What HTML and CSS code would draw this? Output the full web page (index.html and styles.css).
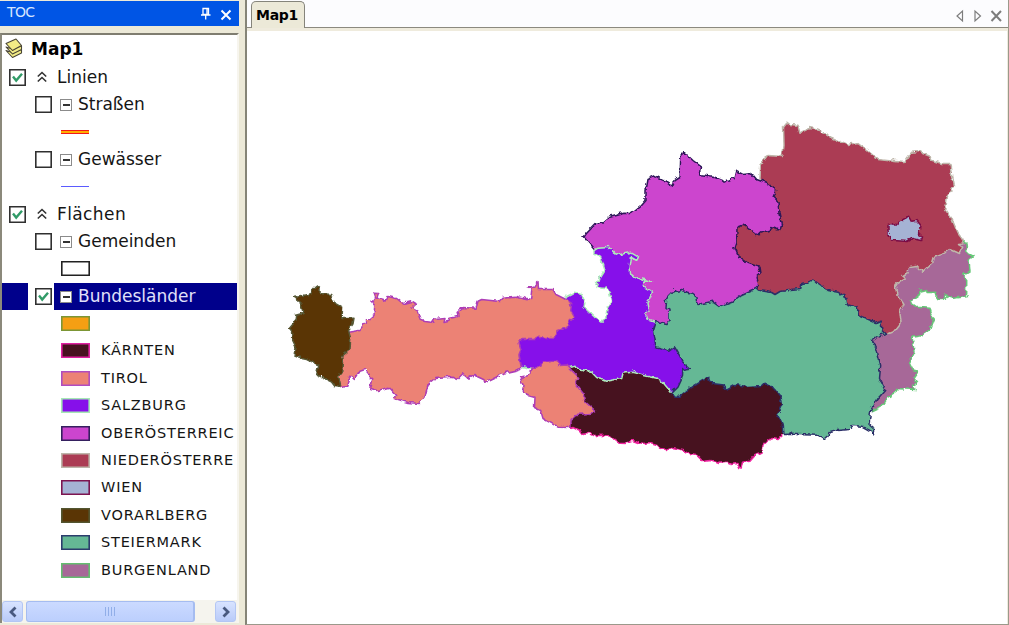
FILE: index.html
```
<!DOCTYPE html>
<html lang="de">
<head>
<meta charset="utf-8">
<title>Map1</title>
<link rel="stylesheet" href="styles.css">
</head>
<body>
<div class="app">
  <aside class="toc">
    <header class="toc-title">
      <span class="toc-name">TOC</span>
      <svg class="pin" width="12" height="14" viewBox="0 0 12 14"><path d="M3 1.500h5.500v6H3zM1 8h9.500M5.700 8v4.500M7 2v5.500" fill="none" stroke="#fff" stroke-width="1.300"/></svg>
      <svg class="close" width="12" height="12" viewBox="0 0 12 12"><path d="M1.500 1.500l9 9M10.500 1.500l-9 9" stroke="#fff" stroke-width="2"/></svg>
    </header>
    <div class="tree">
      <div class="rows">
        <div class="row root">
          <svg class="layers" width="18" height="21" viewBox="0 0 18 21"><g fill="#f3ec86" stroke="#4a4636" stroke-width="1.100" stroke-linejoin="round"><path d="M1 12.500l6.500 7 9-4.500v-3.500l-9 3z"/><path d="M1 9l6.500 7 9-4.500V8l-9 3z"/><path d="M1 5.500L11 1l5.500 6.500-9 5z"/></g></svg>
          <span>Map1</span>
        </div>
        <div class="row group"><span class="check"><svg width="11" height="11" viewBox="0 0 11 11"><path d="M1 4.500l3.200 4L10 1.800" /></svg></span><svg class="chev" width="10" height="12" viewBox="0 0 10 12"><path d="M.8 5.500L5 1.500l4.200 4M.8 10.500L5 6.500l4.200 4"/></svg><span>Linien</span></div>
        <div class="row layer"><span class="check"></span><i class="fold"></i><span>Straßen</span></div>
        <div class="row symbol"><i class="line road"></i></div>
        <div class="row layer"><span class="check"></span><i class="fold"></i><span>Gewässer</span></div>
        <div class="row symbol"><i class="line water"></i></div>
        <div class="row group"><span class="check"><svg width="11" height="11" viewBox="0 0 11 11"><path d="M1 4.500l3.200 4L10 1.800" /></svg></span><svg class="chev" width="10" height="12" viewBox="0 0 10 12"><path d="M.8 5.500L5 1.500l4.200 4M.8 10.500L5 6.500l4.200 4"/></svg><span class="wide">Flächen</span></div>
        <div class="row layer"><span class="check"></span><i class="fold"></i><span>Gemeinden</span></div>
        <div class="row symbol"><i class="swatch plain"></i></div>
        <div class="row layer selected"><span class="check-cell"><span class="check"><svg width="11" height="11" viewBox="0 0 11 11"><path d="M1 4.500l3.200 4L10 1.800" /></svg></span></span><i class="fold"></i><span>Bundesländer</span></div>
        <div class="row symbol"><i class="swatch other"></i></div>
        <div class="row symbol"><i class="swatch kaernten"></i><span>KÄRNTEN</span></div>
        <div class="row symbol"><i class="swatch tirol"></i><span>TIROL</span></div>
        <div class="row symbol"><i class="swatch salzburg"></i><span>SALZBURG</span></div>
        <div class="row symbol"><i class="swatch ooe"></i><span>OBERÖSTERREIC</span></div>
        <div class="row symbol"><i class="swatch noe"></i><span>NIEDERÖSTERRE</span></div>
        <div class="row symbol"><i class="swatch wien"></i><span>WIEN</span></div>
        <div class="row symbol"><i class="swatch vorarlberg"></i><span>VORARLBERG</span></div>
        <div class="row symbol"><i class="swatch steiermark"></i><span>STEIERMARK</span></div>
        <div class="row symbol"><i class="swatch burgenland"></i><span>BURGENLAND</span></div>
      </div>
      <div class="scrollbar">
        <span class="sb-btn"><svg width="10" height="12" viewBox="0 0 10 12"><path d="M7.500 1.500L3 6l4.500 4.500"/></svg></span>
        <span class="thumb"><i></i><i></i><i></i><i></i></span>
        <span class="sb-btn"><svg width="10" height="12" viewBox="0 0 10 12"><path d="M2.500 1.500L7 6l-4.500 4.500"/></svg></span>
      </div>
    </div>
  </aside>
  <main class="view">
    <nav class="tabs">
      <span class="tab">Map1</span>
      <svg class="tab-tools" width="50" height="14" viewBox="0 0 50 14"><g fill="none" stroke="#7d7d7d" stroke-width="1.200"><path d="M7.500 2v10l-5.500-5zM20 2v10l5.500-5z"/><path d="M36.500 2l9.500 10M46 2l-9.500 10" stroke-width="2"/></g></svg>
    </nav>
    <div class="canvas">
      <svg class="map" width="700" height="370" viewBox="280 110 700 370">
        <defs><filter id="coast" filterUnits="userSpaceOnUse" x="280" y="110" width="700" height="370" color-interpolation-filters="sRGB"><feTurbulence type="turbulence" baseFrequency="0.16" numOctaves="1" seed="4" result="n"/><feDisplacementMap in="SourceGraphic" in2="n" scale="4.500" xChannelSelector="R" yChannelSelector="G"/></filter></defs>
        <g class="states" transform="translate(-2 -1.500)" filter="url(#coast)">
          <path class="kaernten" d="M570.700 428L574 427L580 430L583 434L589 433L595 436L607 435.700L614 438L620 442.700L626 443L632 440.700L638 443L645 444L650 443L657 445L661 449L667 450L672 448L683 450L690 454L697 455L703 461L711 460L719 463L727 461.700L732 464L738 463L740.700 470L742.500 461.700L750 460.700L755 455L763 452.700L764 445L767 441.700L772 438L778 439L783.500 434L790 420L785 385L700 375L675 382L660 370L600 365L571 360L560 400L560 420L570.700 423Z"/>
          <path class="burgenland" d="M966.700 242.700L968 253L974 256L969 260L970 271.700L963 275.700L966.700 280L966.700 293L969 296L953 297.700L948 296L945 299L938 299L935.700 291.700L927 292L926.700 290L920 291.700L919 295.700L910 301.700L917 306.700L930 307.700L931.700 315L934.500 319L930.700 329L923 335L913 336.700L915 351.700L909.500 363L913 370L918.500 371.700L914 378L917.700 382.700L913 386L916.700 390L896.700 389L895 394L888 398L882 406.700L872.700 411L868 395L865 345L885 332L890 290L905 260L950 240Z"/>
          <path class="noe" d="M760 178L760.700 165L768 155L782.700 156L784 145L783.500 126.700L786.700 122.700L790 125L798 125.700L800 132.700L810 128L820 130L831.700 138L848 145L858 143L868 150.700L878 159L905 162L911.700 152.700L920 152L930 155.700L931.700 160.700L941.700 164L951 164L952.700 176.700L954.500 186.700L947 198L945.700 209L951.700 218L958 233L964 240.700L964 243.500L958.500 244L962.700 246.700L959.500 253L950.700 249L945 253L934.500 256.700L932.700 262.700L922.700 271.700L916.700 266L910 267L907.700 273L903 276L906 278L896 284L898 295L904 304L900 313L901 323L895 330.700L886.700 334L860 340L800 320L745 305L730 270L728 220L755 205L765 190Z"/>
          <path class="ooe" d="M584 236.700L586.700 232.700L595 224L603 222.700L610 216.700L625 212.700L631.700 213L640 206.700L646 200L646 190L648 179L655 176L660 179L666.700 181.700L672.700 185.700L675 180L680 177L680.700 156.700L685 152.700L693 160L701.700 166.700L700 175L715 177L726.700 181.700L735 177.700L736.700 170.700L743 174L751.700 173L756.700 179L766.700 182.700L776.700 190L774 196.700L779 201.700L780 213L782.500 225L781 230L771.700 227L770 230.700L756.700 235L746.700 227L743 224.700L738 226.700L737.700 240L735 248L738 255L748 262.700L760 266.700L761 273L757 276.700L759 290L740 310L700 315L676 325L667 328L654 326L640 310L626 280L622 262L606 257L595 250Z"/>
          <path class="salzburg" d="M594 253L594 250L598 247.700L609 247L615 253L620 255L631.700 252.700L638.500 256.700L636.700 260L631.500 257L630 268L630.700 275L640 279L652.500 281.700L645 281.700L644 286.700L652.500 291.700L648 303L649.500 310L646 314L648 319L656 322L660 330L664 342L682 342L688 355L692 368L688 374L680.700 385L672 392.700L668 388L662.700 381.700L656.700 377.700L645 375L633 371.700L623 372.700L621.700 378L606.700 380.700L596.700 377L591.700 371.700L578 369L576 365.700L570.700 366.700L560 370L541 369L530 368.500L517 366L514 340L540 325L562 300L566.700 297L575 292.700L581.700 294L585 301.700L584 306.700L595 317L603 321.700L606.700 318L608 308L612.500 300.700L610 291.700L606.700 288L597 287L600 278L605 270L600.700 257Z"/>
          <path class="tirol" d="M349 331.700L360 330L367 321.700L375 315L375.700 305L373 301.700L375.700 297.700L374 292.700L378.700 293L377 298L386 300.700L388 296L396.700 298L404 304L413 301.700L416.700 304L412.700 307.700L418 310.700L421.700 320L425 321L433 322L438 318.700L445 318L444 322L449 320.700L450 317.700L459 316L458 312L462.700 308L476 308.700L478 300.700L481.700 299L500 301L503 297.700L516.700 296.700L531.700 300L532.700 290.700L529.500 287L535 286.700L538 282L538.500 289L553 289L556 294L564 298L571.700 303L570.700 310L575 317.700L570 321.700L568 327L558 330L555 337.700L545 338L539 336.700L535 339L521.700 339L519 343L521 350L519 355L521.700 369L516.700 370.700L503 374L486.700 381.700L483 378.700L475 375L469 378.700L463 374L458 379L453 376.700L436.700 378L428 385L425 396.700L420.700 401.700L419 404L408 403L395 399L396.700 395L390 387.700L378 391L370.700 389L372.700 378L365 369L360 370.700L355 379L350.700 376.700L347.700 386L341 387L335 376L340 350Z"/>
          <path class="tirol" d="M531.700 370L541.700 365L545 361.700L556.700 360.700L560 365L566.700 364.500L571.700 370L579 377L576 384L584 394L586 402L596 411L590 414L576.700 415L571 420L570.700 427L558 426.700L543 418L540.700 410L534.500 407L535 396.700L527 394.500L522.700 390L524 385L521 378L529 376Z"/>
          <path class="vorarlberg" d="M316.700 286L320 289L320 294L331.700 295L334 301.700L342.700 306.700L342 318L348 318L354 317.700L352.700 325L348.500 330L350.700 338L350 350L342.700 356L343.500 361.700L342.700 373L338.500 376.700L341 387L335 386L331.700 381.700L316.700 374L318.700 365L306.700 359L295 356.700L296 346.700L292.700 340L292.700 331.700L289.500 327.700L296 320L296.700 315L304 313L301.700 303L294.500 297L310 295L312.500 290.700Z"/>
          <path class="steiermark" d="M656 322L667 324L670 320L670 310.700L666 308L666.700 298L671.700 292.700L681.700 291L693 294L697 297L698 305L713 301.700L720 306.700L733 301.700L741.700 295L757 288L760 290L771.700 292L775 294L780 291L800.700 289L801.700 284L808 283L814 279.500L818 283L828 290L838 291.700L846.700 297.700L848 305L858 308L860 316L876.700 323L881.700 320.700L883 330L886.700 334L880 336L872.500 341L877 350L880.700 365L879.500 378L885.700 390L878 399L871.700 410L870 425L874.500 429L874.500 435L871.700 432L861.700 426.700L853 426L850 429L838 430L830 432L829 436L825 439.500L818 434.700L790 433.700L784 434L783 423L778 416L782.700 406.700L781 396.700L773 387L765 382.700L761.700 386L746.700 387L735 385L726 390L724 384.500L710 382.700L708.500 377L701.700 380.700L691.700 387L680 396.700L675 396.700L671.700 393L678 386.700L682.500 377L682.700 370L690.700 368.700L683 361.700L679.500 355L675 347L670 350.700L656 347L653.500 330Z"/>
          <path class="wien" d="M889 225L892 224L895 226.700L900 221.700L906.700 218L908.500 215.700L911.700 221.700L916.700 220.700L921 226L919.500 235L922.700 236.700L921.700 240L913 238L908 241L893 240L889 235Z"/>
        </g>
      </svg>
    </div>
  </main>
</div>
</body>
</html>
```
FILE: styles.css
```
* { box-sizing: border-box; }
body { margin: 0; font-family: "DejaVu Sans", Verdana, sans-serif; color: #151515; }
.app { display: flex; width: 1009px; height: 625px; overflow: hidden; background: #ece9d8; }
.toc { display: flex; flex-direction: column; width: 240px; padding-top: 1px; flex: none; }
.toc-title { display: flex; align-items: center; width: 239px; height: 25px; padding: 0 7px; background: #0055e5; }
.toc-name { flex: 1; font-size: 14px; line-height: 22px; color: #d5e5ff; align-self: flex-start; letter-spacing: -.6px; }
.pin { margin-right: 8px; }
.close { margin-top: 2px; }
.tree { display: flex; flex-direction: column; width: 239px; height: 590px; margin-top: 7px; border-top: 2px solid #7f7d70; border-left: 2px solid #8b897b; border-right: 2px solid #f7f5ee; background: #fff; overflow: hidden; }
.rows { flex: 1; padding-top: 1px; overflow: hidden; }
.row { display: flex; align-items: center; height: 27.4px; font-size: 17px; white-space: nowrap; line-height: 27px; }
.root { font-weight: bold; padding-left: 3px; gap: 8px; color: #000; }
.layers { margin-top: -2px; }
.group { padding-left: 7px; }
.wide { letter-spacing: .4px; }
.layer { padding-left: 33px; }
.check { display: flex; align-items: center; justify-content: center; flex: none; width: 17px; height: 17px; border: 1px solid #303030; box-shadow: inset 0 0 0 .6px #303030; background: #fff; }
.check path { fill: none; stroke: #319b68; stroke-width: 2.4; }
.chev { margin: 0 10px 0 11px; }
.chev path { fill: none; stroke: #333; stroke-width: 1.6; }
.fold { flex: none; width: 12px; height: 12px; margin: 2px 6px 0 8px; border: 1px solid #8b8b8b; background: linear-gradient(#333, #333) center / 7px 2px no-repeat #fff; }
.selected { color: #e0e0fa; background: #00008b; padding-left: 26px; width: 235px; }
.check-cell { display: flex; align-items: center; height: 28px; width: 26px; padding-left: 7px; background: #fff; }
.selected .fold { margin-left: 6px; }
.symbol { padding-left: 59px; gap: 11px; font-size: 14.5px; letter-spacing: .8px; width: 234px; overflow: hidden; }
.line { width: 28px; height: 4px; }
.road { background: linear-gradient(#f21818 1px, #ffae00 1px, #ffae00 3px, #f21818 3px); }
.water { height: 1px; background: #5b5bff; }
.swatch { flex: none; width: 29px; height: 15px; border: 1px solid var(--edge); box-shadow: inset 0 0 0 .6px var(--edge); }
.plain { --edge: #222; }
.other { background: #f59f13; --edge: #7c9635; }
.swatch.kaernten { background: #47121f; --edge: #e020a0; }
.swatch.tirol { background: #ec8275; --edge: #b04cc0; }
.swatch.salzburg { background: #8610ea; --edge: #a5e8b5; }
.swatch.ooe { background: #cc45ce; --edge: #35205f; }
.swatch.noe { background: #ab3c54; --edge: #bdb5aa; }
.swatch.wien { background: #a5b3d4; --edge: #7d1550; }
.swatch.vorarlberg { background: #5a3505; --edge: #535530; }
.swatch.steiermark { background: #65b895; --edge: #2c3d6d; }
.swatch.burgenland { background: #a76898; --edge: #64bd70; }
.scrollbar { display: flex; flex: none; height: 23px; padding: 1px 1px 1px 0; background: #f5f4ee; }
.sb-btn { display: flex; align-items: center; justify-content: center; width: 21px; border: 1px solid #b3c6f4; border-radius: 3px; background: linear-gradient(#d8e3ff, #b9cbf9); }
.sb-btn path { fill: none; stroke: #49597f; stroke-width: 2.8; }
.sb-btn:last-child { margin-left: auto; }
.thumb { display: flex; align-items: center; justify-content: center; gap: 1.5px; width: 169px; margin-left: 3px; border: 1px solid #a5bcf0; border-right-width: 2px; border-radius: 3px; background: linear-gradient(#cbdaff, #bccffd); }
.thumb i { width: 1.5px; height: 9px; background: #edf3ff; border-right: 1px solid #91aee8; }
.view { display: flex; flex-direction: column; flex: 1; margin-left: 5px; border-left: 2px solid #858477; border-right: 1px solid #9b998b; border-bottom: 1px solid #9b998b; }
.tabs { display: flex; align-items: flex-end; justify-content: space-between; height: 28px; padding: 0 3px 0 4px; border-bottom: 1px solid #8b897f; background: #fcfcfe; }
.tab { width: 54px; height: 27px; margin-bottom: -1px; padding-left: 4px; border: 1px solid #85847b; border-bottom: 0; border-radius: 5px 5px 0 0; background: #ece9d8; color: #000; font-size: 14px; letter-spacing: -.3px; font-weight: bold; line-height: 27px; }
.tab-tools { margin-bottom: 4px; }
.canvas { flex: 1; border: solid #efebdd; border-width: 3px 1px 0 0; background: #fff; padding: 79px 0 0 33px; }
.map { display: block; }
.states path { stroke-width: 1.5; stroke-linejoin: round; }
.states .kaernten { fill: #47121f; stroke: #f0239f; }
.states .tirol { fill: #ec8275; stroke: #ad3db7; }
.states .salzburg { fill: #8610ea; stroke: #aeeabc; }
.states .ooe { fill: #cc45ce; stroke: #2d1758; }
.states .noe { fill: #ab3c54; stroke: #bfb7ab; }
.states .wien { fill: #a5b3d4; stroke: #7a0b45; }
.states .vorarlberg { fill: #5a3505; stroke: #585a38; }
.states .steiermark { fill: #65b895; stroke: #2b2f68; }
.states .burgenland { fill: #a76898; stroke: #66c878; }
```
